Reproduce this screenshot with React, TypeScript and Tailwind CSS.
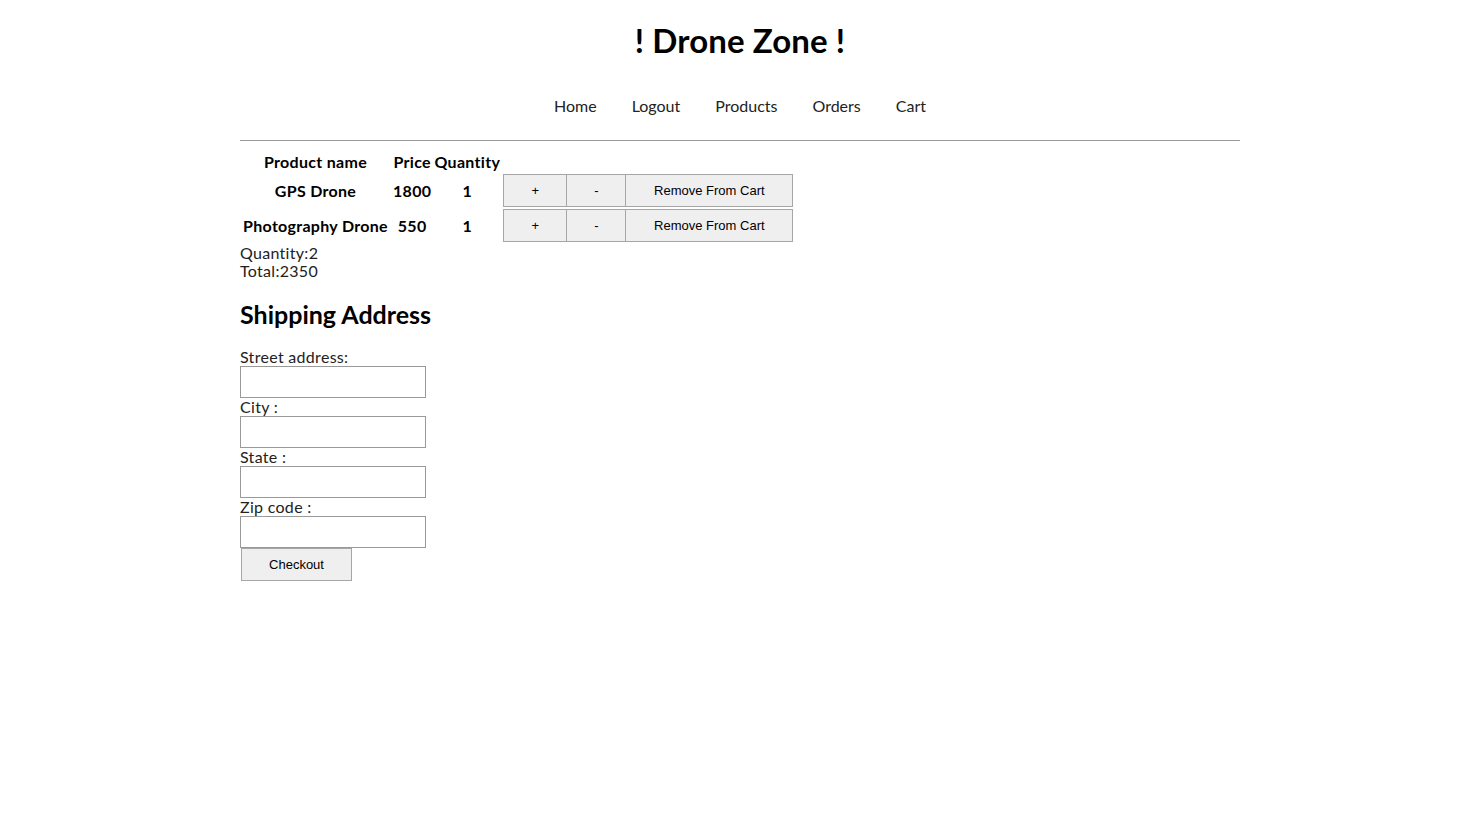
import React from "react"

const items = [
  { name: "GPS Drone", price: 1800, qty: 1 },
  { name: "Photography Drone", price: 550, qty: 1 },
]

const links = ["Home", "Logout", "Products", "Orders", "Cart"]
const fields = ["Street address:", "City :", "State :", "Zip code :"]

const btn =
  "h-[33px] border border-[#a6a6a6] bg-[#efefef] text-[13px] text-black font-['Liberation_Sans',Arial,sans-serif]"

export default function App() {
  return (
    <div className="min-h-screen bg-white text-black font-['Lato',sans-serif]">
      <div className="mx-auto w-[1003px] pl-[3px]">
        <h1 className="pt-[20px] text-center text-[33px] font-bold leading-[40px] tracking-[0.1px]">! Drone Zone !</h1>

        <nav className="mt-[35px] flex justify-center gap-[35px] text-[16px] leading-[22px] text-[#222]">
          {links.map((l) => (
            <a key={l} href="#" className="no-underline">
              {l}
            </a>
          ))}
        </nav>

        <hr className="mt-[23px] border-0 border-t border-[#999]" />

        <table className="mt-[9px] border-separate border-spacing-[2px] -ml-[2px] text-[16px] font-bold tracking-[0.3px]">
          <thead>
            <tr>
              <th className="w-[151px] px-0 text-center leading-[20px]">Product name</th>
              <th className="w-[38px] px-0 text-center leading-[20px]">Price</th>
              <th className="w-[68px] px-0 text-center leading-[20px]">Quantity</th>
              <th className="leading-[20px]"></th>
            </tr>
          </thead>
          <tbody>
            {items.map((it) => (
              <tr key={it.name}>
                <td className="text-center whitespace-nowrap">{it.name}</td>
                <td className="text-center">{it.price}</td>
                <td className="text-center">{it.qty}</td>
                <td className="p-0">
                  <div className="flex font-normal tracking-normal">
                    <button className={`${btn} w-[64px]`}>+</button>
                    <button className={`${btn} w-[60px] -ml-px`}>-</button>
                    <button className={`${btn} w-[168px] -ml-px`}>Remove From Cart</button>
                  </div>
                </td>
              </tr>
            ))}
          </tbody>
        </table>

        <div className="text-[16px] leading-[18px] tracking-[0.3px] text-[#222]">
          <div>Quantity:2</div>
          <div>Total:2350</div>
        </div>

        <h2 className="mt-[19px] text-[25px] font-bold leading-[30px]">Shipping Address</h2>

        <form className="mt-[19px] text-[16px] leading-[18px] tracking-[0.3px] text-[#222]">
          {fields.map((f) => (
            <div key={f}>
              <label className="block">{f}</label>
              <input className="block h-[32px] w-[186px] border border-[#999] bg-white" />
            </div>
          ))}
          <button type="button" className={`${btn} ml-px w-[111px] tracking-normal`}>
            Checkout
          </button>
        </form>
      </div>
    </div>
  )
}
